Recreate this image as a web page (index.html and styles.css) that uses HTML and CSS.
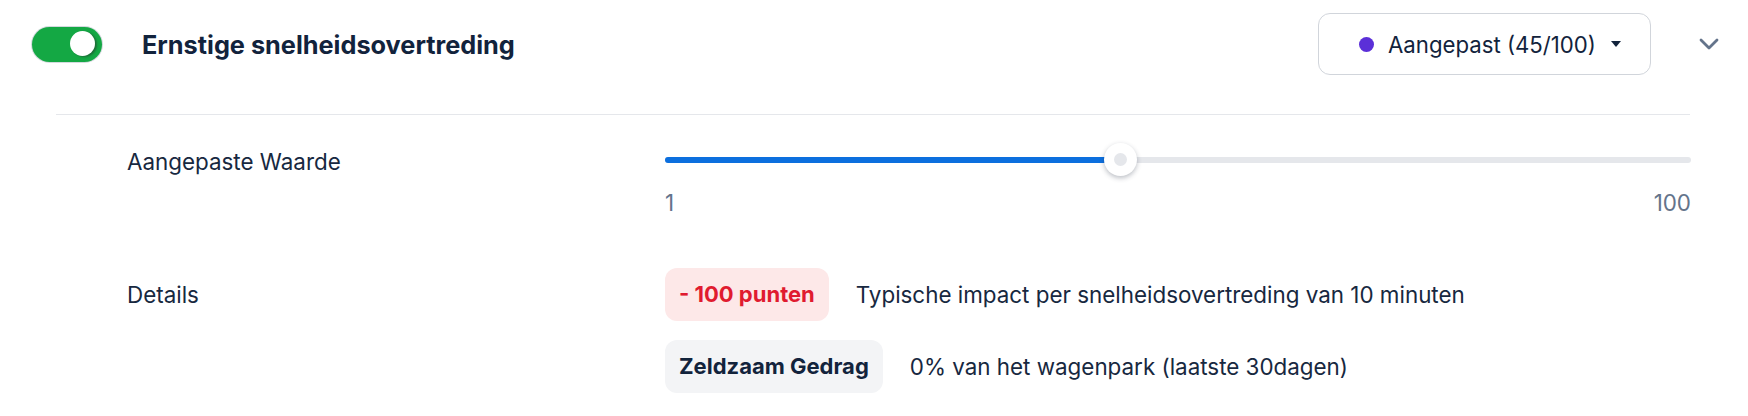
FILE: index.html
```html
<!DOCTYPE html>
<html lang="nl">
<head>
<meta charset="utf-8">
<title>Ernstige snelheidsovertreding</title>
<link rel="stylesheet" href="styles.css">
</head>
<body>
<section class="rule">
  <header class="rule-head">
    <div class="toggle" role="switch" aria-checked="true"><span class="toggle-thumb"></span></div>
    <h2 class="rule-title">Ernstige snelheidsovertreding</h2>
    <button class="select">
      <span class="select-dot"></span>
      <span class="select-label">Aangepast (45/100)</span>
      <span class="select-caret"></span>
    </button>
    <svg class="chevron" width="20" height="12" viewBox="0 0 20 12"><polyline points="2,2 10,10 18,2" fill="none" stroke="#64748b" stroke-width="2.8" stroke-linecap="round" stroke-linejoin="round"/></svg>
  </header>
  <div class="divider"></div>
  <div class="rule-body">
    <div class="label label-slider">Aangepaste Waarde</div>
    <div class="slider-wrap">
      <div class="slider">
        <div class="slider-track"></div>
        <div class="slider-fill" style="width: 44.44%"></div>
        <div class="slider-thumb" style="left: 44.44%"><span class="slider-thumb-dot"></span></div>
      </div>
      <div class="slider-scale"><span>1</span><span>100</span></div>
    </div>
    <div class="label label-details">Details</div>
    <div class="details">
      <div class="detail-row">
        <span class="badge badge-red">- 100 punten</span>
        <span class="detail-text">Typische impact per snelheidsovertreding van 10 minuten</span>
      </div>
      <div class="detail-row">
        <span class="badge badge-gray">Zeldzaam Gedrag</span>
        <span class="detail-text">0% van het wagenpark (laatste 30dagen)</span>
      </div>
    </div>
  </div>
</section>
</body>
</html>
```
FILE: styles.css
```css
* { box-sizing: border-box; }
html, body { margin: 0; padding: 0; background: #ffffff; }
body {
  font-family: Inter, "Noto Sans", "Liberation Sans", sans-serif;
  color: #172840;
  width: 1748px;
  height: 416px;
  overflow: hidden;
}

.rule-head {
  display: flex;
  align-items: center;
  height: 62px;
  margin-top: 13px;
  padding: 0 29px 0 32px;
}

.toggle {
  width: 70px;
  height: 35px;
  border-radius: 18px;
  background: #14a844;
  box-shadow: 0 0 0 1px #d4d9de;
  display: flex;
  align-items: center;
  justify-content: flex-end;
  padding-right: 7px;
  flex: none;
}
.toggle-thumb {
  width: 25px;
  height: 25px;
  border-radius: 50%;
  background: #ffffff;
  box-shadow: 2px 1px 2px rgba(40, 40, 40, 0.45);
  margin-top: -2px;
}

.rule-title {
  flex: 1;
  margin: 0 0 0 40px;
  font-size: 25.3px;
  font-weight: 700;
  color: #12233c;
}

.select {
  width: 333px;
  height: 62px;
  border: 1px solid #d1d5db;
  border-radius: 12px;
  background: #fff;
  display: flex;
  align-items: center;
  padding: 0 0 0 40px;
  font-family: inherit;
  cursor: pointer;
}
.select-dot {
  width: 15px;
  height: 15px;
  border-radius: 50%;
  background: #5b2fd8;
  flex: none;
}
.select-label {
  margin-left: 14px;
  font-size: 22.2px;
  color: #12233c;
}
.select-caret {
  margin-left: 15px;
  width: 0;
  height: 0;
  border-left: 5.5px solid transparent;
  border-right: 5.5px solid transparent;
  border-top: 6px solid #12233c;
}

.chevron {
  margin-left: 48px;
  flex: none;
}

.divider {
  height: 1px;
  background: #e5e7eb;
  margin: 39px 58px 0 56px;
}

.rule-body {
  display: grid;
  grid-template-columns: 538px 1fr;
  padding: 0 57px 0 127px;
}

.label {
  font-size: 22.4px;
  color: #172840;
}
.label-slider {
  margin-top: 29px;
  line-height: 33px;
  padding-top: 1px;
}
.label-details {
  margin-top: 51px;
  line-height: 53px;
}

.slider-wrap { margin-top: 28px; }
.slider {
  position: relative;
  height: 33px;
}
.slider-track,
.slider-fill {
  position: absolute;
  left: 0;
  top: 13.5px;
  height: 6px;
  border-radius: 3px;
}
.slider-track { right: 0; background: #e5e7eb; }
.slider-fill { background: #0c6fde; }
.slider-thumb {
  position: absolute;
  top: 0;
  width: 33px;
  height: 33px;
  margin-left: -16.5px;
  border-radius: 50%;
  background: #fff;
  box-shadow: 0 2px 5px rgba(30, 40, 60, 0.3);
  display: flex;
  align-items: center;
  justify-content: center;
}
.slider-thumb-dot {
  width: 13px;
  height: 13px;
  border-radius: 50%;
  background: #e5e7eb;
}
.slider-scale {
  display: flex;
  justify-content: space-between;
  margin-top: 13px;
  font-size: 22.4px;
  line-height: 28px;
  color: #64748b;
}

.details {
  margin-top: 51px;
  display: flex;
  flex-direction: column;
  gap: 19px;
}
.detail-row {
  display: flex;
  align-items: center;
  gap: 27px;
}
.badge {
  font-size: 22px;
  font-weight: 700;
  line-height: 25px;
  padding: 14px 14px;
  border-radius: 12px;
}
.badge-red { background: #fde8e8; color: #e01b2f; }
.badge-gray { background: #f3f4f6; color: #12233c; }
.detail-text {
  font-size: 22.4px;
  color: #172840;
}
```
